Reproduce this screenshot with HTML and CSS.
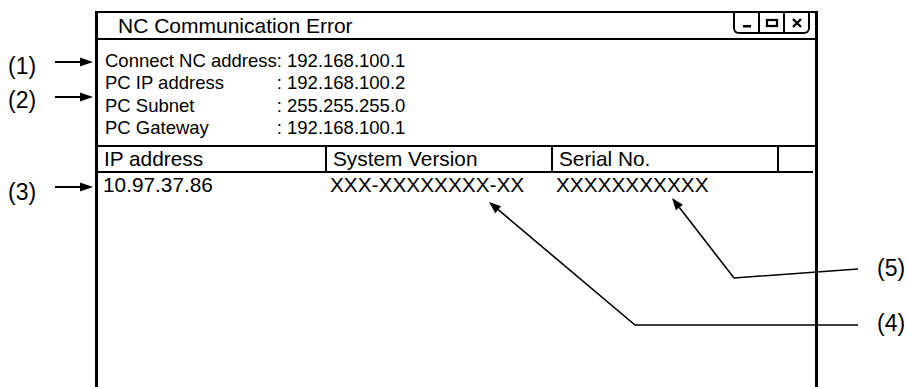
FILE: index.html
```html
<!DOCTYPE html>
<html lang="en">
<head>
    <meta charset="UTF-8">
    <meta name="viewport" content="width=device-width, initial-scale=1.0">
    <title>NC Communication Error</title>
    <link rel="stylesheet" href="styles.css">
</head>
<body>
    <div class="page">
        <div class="window">
            <div class="titlebar">
                <span class="title">NC Communication Error</span>
                <div class="win-buttons">
                    <span class="win-btn">
                        <svg width="10" height="12" viewBox="0 0 10 12"><rect x="1" y="8" width="8" height="2.5" fill="#000"/></svg>
                    </span>
                    <span class="win-btn">
                        <svg width="14" height="12" viewBox="0 0 14 12"><rect x="2" y="3" width="10" height="6" fill="none" stroke="#000" stroke-width="2.2"/></svg>
                    </span>
                    <span class="win-btn">
                        <svg width="12" height="12" viewBox="0 0 12 12"><path d="M2 2 L10 10 M10 2 L2 10" stroke="#000" stroke-width="2.4"/></svg>
                    </span>
                </div>
            </div>

            <div class="info">
                <span>Connect NC address</span><span>: 192.168.100.1</span>
                <span>PC IP address</span><span>: 192.168.100.2</span>
                <span>PC Subnet</span><span>: 255.255.255.0</span>
                <span>PC Gateway</span><span>: 192.168.100.1</span>
            </div>

            <div class="table">
                <div class="row head">
                    <div class="cell">IP address</div>
                    <div class="cell">System Version</div>
                    <div class="cell">Serial No.</div>
                    <div class="cell"></div>
                </div>
                <div class="row">
                    <div class="cell">10.97.37.86</div>
                    <div class="cell">XXX-XXXXXXXX-XX</div>
                    <div class="cell">XXXXXXXXXXX</div>
                    <div class="cell"></div>
                </div>
            </div>
        </div>

        <!-- lignes de renvoi -->
        <svg class="callouts" width="908" height="387" viewBox="0 0 908 387">
            <g stroke="#000" stroke-width="2" fill="none">
                <line x1="55" y1="62" x2="82" y2="62"/>
                <line x1="55" y1="97" x2="82" y2="97"/>
                <line x1="55" y1="187" x2="82" y2="187"/>
            </g>
            <g fill="#000">
                <polygon points="93,62 80,57.5 80,66.5"/>
                <polygon points="93,97 80,92.5 80,101.5"/>
                <polygon points="93,187 80,182.5 80,191.5"/>
            </g>
            <g stroke="#000" stroke-width="1.6" fill="none">
                <polyline points="858,269 734,278 679.4,207.5"/>
                <polyline points="858,325 635,325 498.2,209.7"/>
            </g>
            <g fill="#000">
                <polygon points="672,198 682.9,204.7 675.8,210.2"/>
                <polygon points="489,202 501.1,206.3 495.3,213.2"/>
            </g>
        </svg>
        <span class="label label-1">(1)</span>
        <span class="label label-2">(2)</span>
        <span class="label label-3">(3)</span>
        <span class="label label-4">(4)</span>
        <span class="label label-5">(5)</span>
    </div>
</body>
</html>
```

FILE: styles.css
```css
body {
    margin: 0;
    background-color: #ffffff;
    color: #000000;
    font-family: "Liberation Sans", Arial, sans-serif;
}

.page {
    position: relative;
    width: 908px;
    height: 387px;
    overflow: hidden;
}

.window {
    margin: 11px 0 0 95px;
    width: 717px;
    height: 400px;
    border: 3px solid #000;
    border-top-width: 2px;
    border-bottom: none;
}

.titlebar {
    display: flex;
    justify-content: space-between;
    align-items: flex-start;
    height: 25px;
    border-bottom: 2px solid #000;
}

.title {
    padding-left: 20px;
    font-size: 21px;
    line-height: 26px;
}

.win-buttons {
    display: flex;
    height: 19px;
    margin-right: 5px;
    border: 2px solid #000;
    border-top: none;
    border-radius: 0 0 6px 6px;
}

.win-btn {
    display: flex;
    align-items: center;
    justify-content: center;
    width: 23px;
}

.win-btn + .win-btn {
    border-left: 2px solid #000;
}

.info {
    display: grid;
    grid-template-columns: auto 1fr;
    padding: 10px 0 5px 7px;
    font-size: 18.5px;
    line-height: 22.4px;
    border-bottom: 2px solid #000;
}

.table {
    font-size: 20.8px;
}

.row {
    display: grid;
    grid-template-columns: 227px 226px 226px 1fr;
    height: 24px;
    line-height: 24px;
}

.row .cell {
    padding-left: 5px;
    white-space: nowrap;
}

.row.head {
    border-bottom: 2px solid #000;
    margin-right: 2px;
}

.row.head .cell {
    padding-left: 6px;
}

.row.head .cell + .cell {
    border-left: 2px solid #000;
}

.callouts {
    position: absolute;
    top: 0;
    left: 0;
    pointer-events: none;
}

.label {
    position: absolute;
    font-size: 23px;
    line-height: 23px;
}

.label-1 { left: 8px; top: 55px; }
.label-2 { left: 8px; top: 89px; }
.label-3 { left: 8px; top: 181px; }
.label-4 { left: 877px; top: 312px; }
.label-5 { left: 877px; top: 257px; }
```
